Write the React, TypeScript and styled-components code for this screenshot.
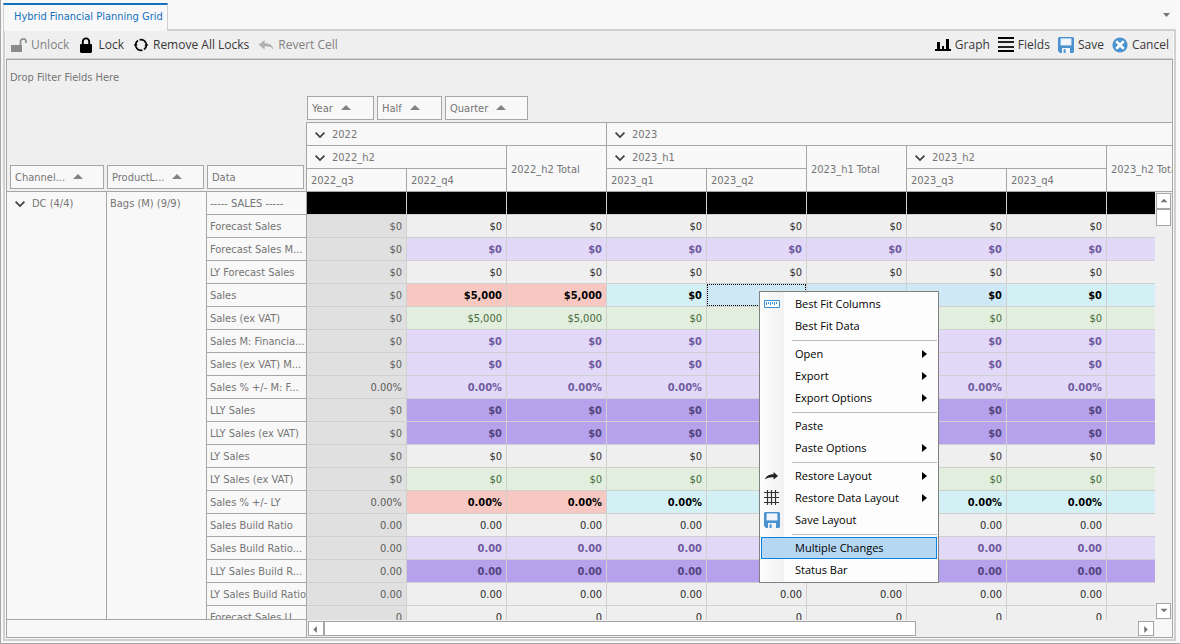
import React from 'react';
import styled, { createGlobalStyle, css } from 'styled-components';

const line = '#a6a6a6';
const softLine = '#d0d0d0';
const face = '#f8f8f8';
const panel = '#efefef';
const uiFont = '"Open Sans", "Noto Sans", sans-serif';
const gridFont = '"DejaVu Sans Condensed", "DejaVu Sans", sans-serif';

const GlobalStyle = createGlobalStyle`
  *, *::before, *::after { box-sizing: border-box; }
  body { margin: 0; background: ${face}; font: 11px/20px ${gridFont}; color: #757575; }
  button { font: inherit; color: inherit; margin: 0; padding: 0; border: 0; background: none; border-radius: 0; }
`;

const Shell = styled.div`
  height: 100vh;
  display: flex;
  flex-direction: column;
  padding: 3px 4px 2px 2px;
  border: solid ${line};
  border-width: 0 0 1px 1px;
  overflow: hidden;
`;

const TabStrip = styled.div`
  display: flex;
  justify-content: space-between;
  height: 26px;
`;

const Tab = styled.button`
  position: relative;
  z-index: 1;
  height: 28px;
  padding: 0 4px 2px 10px;
  background: ${face};
  border: 1px solid ${softLine};
  border-top: 2px solid #1471c0;
  border-bottom: 0;
  color: #1471c0;
  white-space: nowrap;
`;

const TabMenuButton = styled.button`
  width: 20px;
  height: 24px;
  display: grid;
  place-items: center;
`;

const Frame = styled.main`
  flex: 1;
  min-height: 0;
  display: flex;
  flex-direction: column;
  border: 2px solid ${softLine};
  padding: 0 1px 1px;
`;

const Toolbar = styled.div`
  flex: none;
  height: 28px;
  display: flex;
  justify-content: space-between;
  padding: 0 4px 0 5px;
  background: ${panel};
  border-bottom: 1px solid ${softLine};
  font: 12px/26px ${uiFont};
`;

const ToolGroup = styled.div<{ $gap: number }>`
  display: flex;
  gap: ${(p) => p.$gap}px;
`;

const ToolButton = styled.button`
  display: flex;
  align-items: center;
  gap: 4px;
  color: #383838;
  white-space: nowrap;
  &:disabled { color: #828282; }
`;

const PivotPanel = styled.section`
  position: relative;
  flex: 1;
  min-height: 0;
  display: flex;
  flex-direction: column;
  border: 1px solid ${line};
  background: ${panel};
`;

const FilterArea = styled.div`
  flex: none;
  height: 36px;
  padding: 8px 3px;
`;

const ColumnFields = styled.div`
  flex: none;
  display: flex;
  gap: 3px;
  padding: 0 0 2px 300px;
`;

const FieldButton = styled.button<{ $width?: number }>`
  display: flex;
  align-items: center;
  gap: 8px;
  height: 24px;
  width: ${(p) => (p.$width ? `${p.$width}px` : '100%')};
  padding: 2px 4px 0;
  border: 1px solid ${line};
  background: ${face};
  white-space: nowrap;
`;

const Clip = styled.div`
  flex: none;
  overflow: hidden;
`;

const PivotTable = styled.table`
  width: 1200px;
  table-layout: fixed;
  border-collapse: separate;
  border-spacing: 0;
`;

const HeadCell = styled.th<{ $top?: boolean }>`
  height: ${(p) => (p.$top ? '24px' : '23px')};
  padding: 2px 4px 0;
  text-align: left;
  font-weight: normal;
  white-space: nowrap;
  background: ${face};
  border: solid ${line};
  border-width: ${(p) => (p.$top ? '1px 1px 1px 0' : '0 1px 1px 0')};
`;

const AreaCell = styled.th<{ $edge?: 'first' | 'last' }>`
  vertical-align: bottom;
  font-weight: normal;
  padding: 0 3px 2px ${(p) => (p.$edge === 'first' ? '3px' : '0')};
  border-bottom: 1px solid ${line};
  ${(p) => p.$edge === 'last' && css`
    padding-right: 2px;
    border-right: 1px solid ${line};
  `}
`;

const Toggle = styled.button`
  display: flex;
  align-items: center;
  gap: 7px;
  padding-left: 4px;
`;

const Body = styled.div`
  flex: 1;
  min-height: 0;
  display: flex;
`;

const Viewport = styled.div`
  flex: 1;
  min-width: 0;
  overflow: hidden;
`;

const GroupCell = styled.th<{ $flush?: boolean }>`
  vertical-align: top;
  padding: 2px ${(p) => (p.$flush ? '3px' : '4px')} 0;
  text-align: left;
  font-weight: normal;
  background: ${face};
  border-right: 1px solid ${line};
`;

const RowHead = styled.th`
  height: 23px;
  padding: 2px 0 0 3px;
  text-align: left;
  font-weight: normal;
  white-space: nowrap;
  overflow: hidden;
  background: ${face};
  border: solid ${line};
  border-width: 0 1px 1px 0;
`;

type Tone = 'black' | 'plain' | 'locked' | 'lilac' | 'purple' | 'green' | 'pink' | 'cyan' | 'picked';

const tones: Record<Tone, [string, string, number]> = {
  black: ['#000', '#000', 400],
  plain: ['#efefef', '#2b2b2b', 400],
  locked: ['#e0e0e0', '#5c5c5c', 400],
  lilac: ['#e2d9f8', '#6e5a9e', 700],
  purple: ['#b6a1ec', '#54447e', 700],
  green: ['#e2efde', '#44683a', 400],
  pink: ['#f7c8c2', '#000', 700],
  cyan: ['#d3f1f5', '#000', 700],
  picked: ['#cfe8f5', '#000', 700],
};

const DataCell = styled.td<{ $tone: Tone; $focused?: boolean }>`
  height: 23px;
  padding: ${(p) => (p.$focused ? '0' : '2px 4px 0')};
  text-align: right;
  white-space: nowrap;
  background: ${(p) => tones[p.$tone][0]};
  color: ${(p) => tones[p.$tone][1]};
  font-weight: ${(p) => tones[p.$tone][2]};
  border: solid ${softLine};
  border-width: 0 1px 1px 0;
`;

const FocusRing = styled.div`
  height: 22px;
  padding: 1px 3px 0 0;
  border: 1px dotted #000;
`;

const VScroll = styled.div`
  flex: none;
  width: 17px;
  display: flex;
  flex-direction: column;
  padding: 1px;
`;

const HScroll = styled.div`
  flex: 1;
  min-width: 0;
  display: flex;
  padding: 1px;
`;

const Spring = styled.div`
  flex: 1;
`;

const ScrollButton = styled.button<{ $vertical?: boolean }>`
  flex: none;
  width: ${(p) => (p.$vertical ? '15px' : '16px')};
  height: ${(p) => (p.$vertical ? '16px' : '15px')};
  display: grid;
  place-items: center;
  border: 1px solid ${line};
  background: #fff;
`;

const VThumb = styled.div`
  height: 17px;
  border: 1px solid ${line};
  background: #fff;
`;

const HThumb = styled.div`
  flex: 0 0 70%;
  border: 1px solid ${line};
  background: #fff;
`;

const Footer = styled.div`
  flex: none;
  display: flex;
  height: 17px;
`;

const FooterLead = styled.div`
  position: relative;
  flex: none;
  width: 300px;
  margin-top: -1px;
  background: ${face};
  border: solid ${line};
  border-width: 1px 1px 0 0;
`;

const FooterCorner = styled.div`
  flex: none;
  width: 17px;
  background: ${face};
`;

const Menu = styled.div`
  position: absolute;
  left: 752px;
  top: 231px;
  width: 180px;
  padding: 1px;
  border: 1px solid #808080;
  background: linear-gradient(to right, #fdfdfd, #f1f1f1 24px, #fdfdfd 24px);
  color: #000;
  font: 11px/20px ${uiFont};
`;

const MenuItem = styled.button<{ $active?: boolean }>`
  display: grid;
  grid-template-columns: 31px 1fr 14px;
  align-items: center;
  width: 100%;
  height: 22px;
  padding: 0 0 0 2px;
  border: 1px solid ${(p) => (p.$active ? '#0f7fd8' : 'transparent')};
  background: ${(p) => (p.$active ? '#b5d7f3' : 'transparent')};
  text-align: left;
  white-space: nowrap;
`;

const MenuIcon = styled.span`
  display: flex;
`;

const MenuRule = styled.hr`
  height: 1px;
  margin: 3px 0 2px 31px;
  border: 0;
  background: #bdbdbd;
`;

const Icon = styled.svg`
  display: block;
  flex: none;
`;

const SortUp = () => (
  <Icon width="10" height="9" viewBox="0 0 10 9"><path d="M5 0 10 5H0z" fill="#828282" /></Icon>
);
const Chevron = () => (
  <Icon width="10" height="8" viewBox="0 0 10 8"><path d="M.6 1.6 5 6 9.4 1.6" fill="none" stroke="#404040" strokeWidth="1.7" /></Icon>
);
const arrowPaths = { up: 'M4 1 8 5H0z', down: 'M0 1h8L4 5z', left: 'M5 0v8L1 4z', right: 'M2 0v8l4-4z' };
const ArrowGlyph = ({ dir }: { dir: keyof typeof arrowPaths }) => (
  <Icon width="8" height="8" viewBox="0 -1 8 9"><path d={arrowPaths[dir]} fill="#757575" /></Icon>
);
const UnlockIcon = () => (
  <Icon width="16" height="16" viewBox="0 0 16 16" fill="#8b8b8b">
    <path d="M0 8h11v7H0z" />
    <path d="M9.5 8V4.4a2.8 2.8 0 0 1 5.4-.6V6" fill="none" stroke="#8b8b8b" strokeWidth="1.7" />
  </Icon>
);
const LockIcon = () => (
  <Icon width="16" height="16" viewBox="0 0 16 16">
    <path d="M2 7.5 3 7h10l1 .5V15l-1 1H3l-1-1z" />
    <path d="M4.8 8V4.6a3.2 3.2 0 0 1 6.4 0V8" fill="none" stroke="#000" strokeWidth="1.9" />
  </Icon>
);
const RefreshIcon = () => (
  <Icon width="16" height="16" viewBox="0 0 16 16">
    <path d="M2.6 8A5.4 5.4 0 0 1 5 3.5M6.6 2.8A5.4 5.4 0 0 1 13 6.4M13.4 8A5.4 5.4 0 0 1 11 12.5M9.4 13.2A5.4 5.4 0 0 1 3 9.6" fill="none" stroke="#000" strokeWidth="1.8" />
    <path d="M.6 7.6h4L2.6 10.2zM11.4 8.4h4l-2-2.6z" />
  </Icon>
);
const RevertIcon = () => (
  <Icon width="16" height="16" viewBox="0 0 16 16">
    <path d="M6.6 3v3.2c5 0 8.2 2 8.8 6.2-2.2-2.6-4.6-3.2-8.8-3.2v3.2L.6 7.8z" fill="#b0b0b0" />
  </Icon>
);
const GraphIcon = () => (
  <Icon width="16" height="16" viewBox="0 0 16 16">
    <path d="M0 12h16v2H0zM2 5h3v8H2zM7 9h2v4H7zM11 2h3v11h-3z" />
  </Icon>
);
const FieldsIcon = () => (
  <Icon width="16" height="16" viewBox="0 0 16 16">
    <path d="M0 0h16v2H0zM0 13h16v2H0z" />
    <path d="M0 4h16v2H0zM0 9h16v2H0z" fill="#222" />
  </Icon>
);
const SaveIcon = () => (
  <Icon width="16" height="16" viewBox="0 0 16 16">
    <path d="M1 0h14l1 1v14l-1 1H2l-2-2V1z" fill="#4b92d0" />
    <path d="M2.6 1.4h10.8v7H2.6z" fill="#f2f6fa" />
    <path d="M4 11h8v5H4z" fill="#f2f6fa" />
    <path d="M5.6 12.2h2V16h-2z" fill="#4b92d0" />
  </Icon>
);
const CancelIcon = () => (
  <Icon width="16" height="16" viewBox="0 0 16 16">
    <circle cx="8" cy="8" r="7.6" fill="#4b92d0" />
    <path d="M5.2 5.2l5.6 5.6M10.8 5.2l-5.6 5.6" stroke="#fff" strokeWidth="2.6" strokeLinecap="square" />
  </Icon>
);
const RulerIcon = () => (
  <Icon width="16" height="16" viewBox="0 0 16 16" fill="none" stroke="#3f8fd4">
    <path d="M.5 4.5h15v7H.5z" fill="#fff" />
    <path d="M2.5 6v3M4.5 6v2M6.5 6v3M8.5 6v2M10.5 6v3M12.5 6v2" />
  </Icon>
);
const RestoreIcon = () => (
  <Icon width="16" height="16" viewBox="0 0 16 16">
    <path d="M9.6 4 14 8l-4.4 3.4V9.4C6 9.2 3.4 9.8 1 11.6 1.6 8.4 4.8 6.2 9.6 6.2z" fill="#222" />
  </Icon>
);
const GridIcon = () => (
  <Icon width="16" height="16" viewBox="0 0 16 16">
    <path d="M3.5 0v15M7.5 0v15M11.5 0v15M0 2.5h15M0 7.5h15M0 12.5h15" stroke="#333" strokeWidth="1.2" />
  </Icon>
);
const SubmenuArrow = () => (
  <Icon width="5" height="8" viewBox="0 0 5 8"><path d="M0 0v8l5-4z" /></Icon>
);

const zero = '$0';
const pct = '0.00%';
const dec = '0.00';

interface RowSpec { label: string; kind: Tone | 'mixed'; value: string; changed?: string }

const rows: RowSpec[] = [
  { label: '----- SALES -----', kind: 'black', value: '' },
  { label: 'Forecast Sales', kind: 'plain', value: zero },
  { label: 'Forecast Sales M...', kind: 'lilac', value: zero },
  { label: 'LY Forecast Sales', kind: 'plain', value: zero },
  { label: 'Sales', kind: 'mixed', value: zero, changed: '$5,000' },
  { label: 'Sales (ex VAT)', kind: 'green', value: zero, changed: '$5,000' },
  { label: 'Sales M: Financia...', kind: 'lilac', value: zero },
  { label: 'Sales (ex VAT) M...', kind: 'lilac', value: zero },
  { label: 'Sales % +/- M: F...', kind: 'lilac', value: pct },
  { label: 'LLY Sales', kind: 'purple', value: zero },
  { label: 'LLY Sales (ex VAT)', kind: 'purple', value: zero },
  { label: 'LY Sales', kind: 'plain', value: zero },
  { label: 'LY Sales (ex VAT)', kind: 'green', value: zero },
  { label: 'Sales % +/- LY', kind: 'mixed', value: pct },
  { label: 'Sales Build Ratio', kind: 'plain', value: dec },
  { label: 'Sales Build Ratio...', kind: 'lilac', value: dec },
  { label: 'LLY Sales Build R...', kind: 'purple', value: dec },
  { label: 'LY Sales Build Ratio', kind: 'plain', value: dec },
  { label: 'Forecast Sales U...', kind: 'plain', value: '0' },
];

const FOCUSED_ROW = 4;
const FOCUSED_COLUMN = 4;
const columns = [0, 1, 2, 3, 4, 5, 6, 7, 8];

function toneOf(row: RowSpec, rowIndex: number, column: number): Tone {
  if (row.kind === 'black') return 'black';
  if (column === 0) return 'locked';
  if (row.kind !== 'mixed') return row.kind;
  if (column < 3) return 'pink';
  return rowIndex === FOCUSED_ROW && column > 3 && column < 7 ? 'picked' : 'cyan';
}

function valueOf(row: RowSpec, column: number) {
  return row.changed && (column === 1 || column === 2) ? row.changed : row.value;
}

const menu: ({ label: string; icon?: React.ReactNode; sub?: boolean; active?: boolean } | null)[] = [
  { label: 'Best Fit Columns', icon: <RulerIcon /> },
  { label: 'Best Fit Data' },
  null,
  { label: 'Open', sub: true },
  { label: 'Export', sub: true },
  { label: 'Export Options', sub: true },
  null,
  { label: 'Paste' },
  { label: 'Paste Options', sub: true },
  null,
  { label: 'Restore Layout', icon: <RestoreIcon />, sub: true },
  { label: 'Restore Data Layout', icon: <GridIcon />, sub: true },
  { label: 'Save Layout', icon: <SaveIcon /> },
  null,
  { label: 'Multiple Changes', active: true },
  { label: 'Status Bar' },
];

const Expander = ({ children }: { children: React.ReactNode }) => (
  <Toggle aria-expanded="true"><Chevron />{children}</Toggle>
);

const Columns = () => (
  <colgroup>{Array.from({ length: 12 }, (_, i) => <col key={i} width={100} />)}</colgroup>
);

export default function App() {
  return (
    <Shell>
      <GlobalStyle />
      <TabStrip role="tablist">
        <Tab role="tab" aria-selected="true">Hybrid Financial Planning Grid</Tab>
        <TabMenuButton aria-label="Open tabs">
          <Icon width="7" height="4" viewBox="0 0 7 4"><path d="M0 0h7L3.5 4z" fill="#757575" /></Icon>
        </TabMenuButton>
      </TabStrip>
      <Frame>
        <Toolbar role="toolbar">
          <ToolGroup $gap={9}>
            <ToolButton disabled><UnlockIcon />Unlock</ToolButton>
            <ToolButton><LockIcon />Lock</ToolButton>
            <ToolButton><RefreshIcon />Remove All Locks</ToolButton>
            <ToolButton disabled><RevertIcon />Revert Cell</ToolButton>
          </ToolGroup>
          <ToolGroup $gap={8}>
            <ToolButton><GraphIcon />Graph</ToolButton>
            <ToolButton><FieldsIcon />Fields</ToolButton>
            <ToolButton><SaveIcon />Save</ToolButton>
            <ToolButton><CancelIcon />Cancel</ToolButton>
          </ToolGroup>
        </Toolbar>
        <PivotPanel>
          <FilterArea>Drop Filter Fields Here</FilterArea>
          <ColumnFields>
            <FieldButton $width={67}>Year<SortUp /></FieldButton>
            <FieldButton $width={65}>Half<SortUp /></FieldButton>
            <FieldButton $width={83}>Quarter<SortUp /></FieldButton>
          </ColumnFields>
          <Clip>
            <PivotTable>
              <Columns />
              <thead>
                <tr>
                  <AreaCell rowSpan={3} $edge="first"><FieldButton>Channel...<SortUp /></FieldButton></AreaCell>
                  <AreaCell rowSpan={3}><FieldButton>ProductL...<SortUp /></FieldButton></AreaCell>
                  <AreaCell rowSpan={3} $edge="last"><FieldButton>Data</FieldButton></AreaCell>
                  <HeadCell $top colSpan={3}><Expander>2022</Expander></HeadCell>
                  <HeadCell $top colSpan={6}><Expander>2023</Expander></HeadCell>
                </tr>
                <tr>
                  <HeadCell colSpan={2}><Expander>2022_h2</Expander></HeadCell>
                  <HeadCell rowSpan={2}>2022_h2 Total</HeadCell>
                  <HeadCell colSpan={2}><Expander>2023_h1</Expander></HeadCell>
                  <HeadCell rowSpan={2}>2023_h1 Total</HeadCell>
                  <HeadCell colSpan={2}><Expander>2023_h2</Expander></HeadCell>
                  <HeadCell rowSpan={2}>2023_h2 Total</HeadCell>
                </tr>
                <tr>
                  {['2022_q3', '2022_q4', '2023_q1', '2023_q2', '2023_q3', '2023_q4'].map((q) => (
                    <HeadCell key={q}>{q}</HeadCell>
                  ))}
                </tr>
              </thead>
            </PivotTable>
          </Clip>
          <Body>
            <Viewport>
              <PivotTable>
                <Columns />
                <tbody>
                  {rows.map((row, r) => (
                    <tr key={row.label}>
                      {r === 0 && (
                        <>
                          <GroupCell rowSpan={rows.length}><Expander>DC (4/4)</Expander></GroupCell>
                          <GroupCell rowSpan={rows.length} $flush>Bags (M) (9/9)</GroupCell>
                        </>
                      )}
                      <RowHead scope="row">{row.label}</RowHead>
                      {columns.map((c) => {
                        const focused = r === FOCUSED_ROW && c === FOCUSED_COLUMN;
                        const value = valueOf(row, c);
                        return (
                          <DataCell key={c} $tone={toneOf(row, r, c)} $focused={focused}>
                            {focused ? <FocusRing>{value}</FocusRing> : value}
                          </DataCell>
                        );
                      })}
                    </tr>
                  ))}
                </tbody>
              </PivotTable>
            </Viewport>
            <VScroll>
              <ScrollButton $vertical aria-label="Scroll up"><ArrowGlyph dir="up" /></ScrollButton>
              <VThumb />
              <Spring />
              <ScrollButton $vertical aria-label="Scroll down"><ArrowGlyph dir="down" /></ScrollButton>
            </VScroll>
          </Body>
          <Footer>
            <FooterLead />
            <HScroll>
              <ScrollButton aria-label="Scroll left"><ArrowGlyph dir="left" /></ScrollButton>
              <HThumb />
              <Spring />
              <ScrollButton aria-label="Scroll right"><ArrowGlyph dir="right" /></ScrollButton>
            </HScroll>
            <FooterCorner />
          </Footer>
          <Menu role="menu">
            {menu.map((item, i) =>
              item ? (
                <MenuItem key={item.label} role="menuitem" $active={item.active}>
                  <MenuIcon>{item.icon}</MenuIcon>
                  {item.label}
                  {item.sub && <SubmenuArrow />}
                </MenuItem>
              ) : (
                <MenuRule key={i} />
              ),
            )}
          </Menu>
        </PivotPanel>
      </Frame>
    </Shell>
  );
}
